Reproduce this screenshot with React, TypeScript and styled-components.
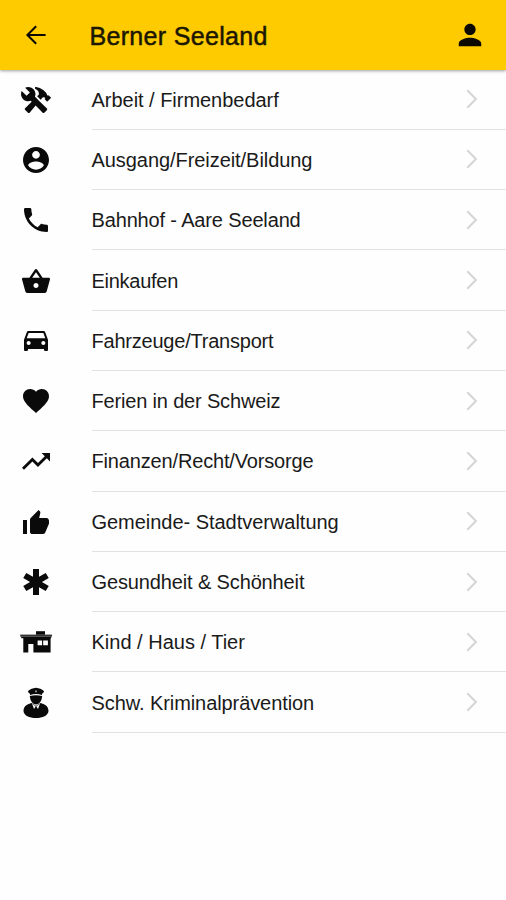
import React from "react";
import type { ComponentType } from "react";
import styled, { createGlobalStyle } from "styled-components";
import {
  IoMdBasket,
  IoMdCall,
  IoMdCar,
  IoMdConstruct,
  IoMdContact,
  IoMdHeart,
  IoMdMedical,
  IoMdPerson,
  IoMdThumbsUp,
  IoMdTrendingUp,
} from "react-icons/io";

const GlobalStyle = createGlobalStyle`
  * { box-sizing: border-box; }
  body {
    margin: 0;
    background: #fefefe;
    color: #1a1a1a;
    font-family: "Liberation Sans", Arial, sans-serif;
  }
`;

const Screen = styled.div`
  display: flex;
  flex-direction: column;
  height: 900px;
  overflow: hidden;
`;

const Header = styled.header`
  display: flex;
  flex: none;
  align-items: center;
  height: 69.5px;
  padding: 0 21px 0 20px;
  background: #fdcb00;
  box-shadow: 0 1px 3px rgba(0, 0, 0, 0.38);
`;

const IconButton = styled.button`
  display: flex;
  align-items: center;
  justify-content: center;
  width: 31px;
  height: 32px;
  padding: 0;
  border: 0;
  background: none;
  color: #0c0a00;
`;

const Title = styled.h1`
  flex: 1;
  margin: 3px 0 0 38.500px;
  font-size: 25px;
  font-weight: 400;
  line-height: 30px;
  letter-spacing: 0.32px;
  -webkit-text-stroke: 0.5px currentColor;
  color: #1c1700;
`;

const List = styled.ul`
  margin: 0;
  padding: 0;
  list-style: none;
`;

const Row = styled.li`
  display: flex;
  height: 60.3px;
`;

const IconCell = styled.span`
  display: flex;
  flex: none;
  align-items: center;
  justify-content: center;
  width: 72px;
  margin-right: 19.5px;
  color: #0a0a0a;
`;

const RowBody = styled.div`
  display: flex;
  flex: 1;
  align-items: center;
  justify-content: space-between;
  padding-right: 27px;
  border-bottom: 1px solid #e2e2e2;
`;

const Label = styled.span<{ $spacing: number }>`
  padding-top: 1px;
  font-size: 20px;
  line-height: 24px;
  white-space: nowrap;
  letter-spacing: ${(p) => p.$spacing}px;
`;

function BackArrow() {
  return (
    <svg width="22" height="22" viewBox="0 0 22 22" fill="none" stroke="currentColor" strokeWidth="2">
      <path d="M20.600 11H2.900M11.200 2.200 2.400 11l8.800 8.800" />
    </svg>
  );
}

function Chevron() {
  return (
    <svg width="14" height="22" viewBox="0 0 14 22" fill="none" stroke="#d6d6d6" strokeWidth="2.1">
      <path d="M2.300 2.200 10.900 11l-8.600 8.800" />
    </svg>
  );
}

function HouseIcon() {
  return (
    <svg width="32" height="32" viewBox="0 0 32 32" fill="currentColor">
      <path d="M16 5.200h9v3.600h-9z" />
      <path d="M.2 8.600h31.800v2H.2z" fill="#333" />
      <path d="M1.200 10.600h30v1.600h-30z" />
      <path
        fillRule="evenodd"
        d="M3.300 11h27.300v15.500H13.400v-8.400H8.300v8.400h-5zM17.600 14.600v4.600h4.500v-4.600zM23.200 14.600v4.600h4.700v-4.600z"
      />
    </svg>
  );
}

function OfficerIcon() {
  return (
    <svg width="32" height="32" viewBox="0 0 32 32" fill="currentColor">
      <path d="M16 .8c3.200.4 5.800 1.400 7.900 3.100.3 1.200-.7 2.200-1.900 2.800v1.200c-3.800-1.100-8.200-1.100-12 0V6.700c-1.200-.6-2.200-1.600-1.900-2.800C10.200 2.200 12.800 1.200 16 .8z" />
      <path d="M16 3.200l1 .7-.4 1.300h-1.200L15 3.900z" fill="#aaa" />
      <path d="M9.800 9.100c3.900-1.200 8.500-1.200 12.400 0l-.3 1.900c-.6 3.600-3 6.400-5.900 6.400s-5.300-2.800-5.900-6.400z" />
      <path d="M11.700 15.900 16 19l4.300-3.100c4.500 1 8.100 3.200 8.200 7.800 0 4.700-6 7.300-12.500 7.300S3.500 28.400 3.500 23.700c.1-4.600 3.700-6.800 8.200-7.800z" />
      <path d="M12 16.500 14 22l1.700-2.600zM20 16.500 18 22l-1.700-2.600z" fill="#fefefe" />
    </svg>
  );
}

interface Category {
  label: string;
  Icon: ComponentType<{ size?: number }>;
  spacing: number;
}

const categories: Category[] = [
  { label: "Arbeit / Firmenbedarf", Icon: IoMdConstruct, spacing: -0.03 },
  { label: "Ausgang/Freizeit/Bildung", Icon: IoMdContact, spacing: -0.06 },
  { label: "Bahnhof - Aare Seeland", Icon: IoMdCall, spacing: -0.15 },
  { label: "Einkaufen", Icon: IoMdBasket, spacing: -0.27 },
  { label: "Fahrzeuge/Transport", Icon: IoMdCar, spacing: -0.22 },
  { label: "Ferien in der Schweiz", Icon: IoMdHeart, spacing: -0.17 },
  { label: "Finanzen/Recht/Vorsorge", Icon: IoMdTrendingUp, spacing: -0.16 },
  { label: "Gemeinde- Stadtverwaltung", Icon: IoMdThumbsUp, spacing: -0.03 },
  { label: "Gesundheit & Schönheit", Icon: IoMdMedical, spacing: -0.13 },
  { label: "Kind / Haus / Tier", Icon: HouseIcon, spacing: 0 },
  { label: "Schw. Kriminalprävention", Icon: OfficerIcon, spacing: -0.08 },
];

export default function App() {
  return (
    <Screen>
      <GlobalStyle />
      <Header>
        <IconButton aria-label="Zurück">
          <BackArrow />
        </IconButton>
        <Title>Berner Seeland</Title>
        <IconButton aria-label="Profil">
          <IoMdPerson size={30} />
        </IconButton>
      </Header>
      <List>
        {categories.map(({ label, Icon, spacing }) => (
          <Row key={label}>
            <IconCell>
              <Icon size={32} />
            </IconCell>
            <RowBody>
              <Label $spacing={spacing}>{label}</Label>
              <Chevron />
            </RowBody>
          </Row>
        ))}
      </List>
    </Screen>
  );
}
